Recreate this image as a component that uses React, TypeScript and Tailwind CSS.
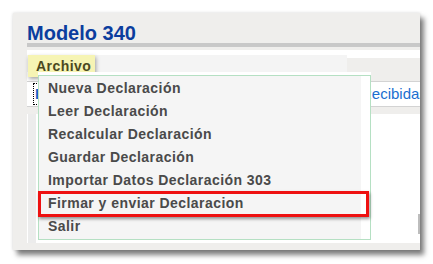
import React from 'react';

const menuItems = [
  'Nueva Declaración',
  'Leer Declaración',
  'Recalcular Declaración',
  'Guardar Declaración',
  'Importar Datos Declaración 303',
  'Firmar y enviar Declaracion',
  'Salir',
];

const App: React.FC = () => {
  return (
    <div className="relative w-[433px] h-[264px] overflow-hidden bg-white pt-[13px] pl-[13px] font-['Liberation_Sans',Arial,sans-serif]">
      {/* Window */}
      <div className="flex flex-col w-[407px] h-[237px] overflow-hidden bg-[#efeeec] pl-[14px] pt-[10px] pb-[7px] shadow-[4px_5px_5px_rgba(0,0,0,0.5),0_0_3px_rgba(0,0,0,0.15)]">
        <h1 className="text-[20px] leading-[20px] font-bold text-[#0b3d9e]">Modelo 340</h1>
        <div className="h-[4px] bg-[#c8c8c8]" />

        {/* Content panel */}
        <div className="mt-[3px] flex-1 flex flex-col bg-white">
          <div className="h-[5px]" />
          <div className="flex h-[27px] border-b border-[#d3d3d3]">
            <div className="w-[320px] h-[17px] bg-[#f4f4f4]" />
            <div className="flex-1 mt-[3px] bg-[#efeeec]" />
          </div>
          <div className="flex items-center h-[24px] whitespace-nowrap">
            <span className="ml-[6px] w-[12px] shrink-0 border border-dotted border-black px-[1px] text-[15px] leading-[20px] font-bold text-[#1565c8]">
              F
            </span>
            <span className="ml-[316px] text-[15px] text-[#1a6fd0]">Recibidas</span>
          </div>
          <div className="h-[8px] border-t border-[#d3d3d3] bg-[#efeeec]" />
          <div className="flex-1 flex">
            <div className="w-[9px] border-l border-white bg-[#ececec]" />
            <div className="flex-1 flex justify-end pt-[100px]">
              <div className="w-[2px] h-[20px] bg-[#bdbdbd]" />
            </div>
          </div>
        </div>
      </div>

      {/* Archivo button */}
      <div className="absolute left-[28px] top-[55px] w-[67px] h-[22px] flex items-center pl-[8px] bg-[#f6f4b4] shadow-[1px_2px_4px_rgba(0,0,0,0.35)] text-[14px] font-bold tracking-[0.45px] text-[#4b4920]">
        Archivo
      </div>

      {/* Dropdown menu */}
      <div className="absolute left-[38px] top-[72px] w-[333px] bg-white pt-[3px] pb-[3px]">
        <div className="relative border border-[#b5e0c3] bg-[#f5f5f5] pt-[1px] pb-[1px] pr-[9px]">
          <div className="absolute right-0 top-0 bottom-0 w-[9px] bg-white" />
          {menuItems.map((item, i) => (
            <div
              key={item}
              className="relative h-[23px] flex items-center pl-[9px] text-[14px] font-bold tracking-[0.45px] text-[#4a4a4a] whitespace-nowrap"
            >
              {i === 5 && (
                <div className="absolute -left-[1px] -top-[1px] w-[331px] h-[26px] border-[3px] border-[#ee1111] shadow-[1px_2px_3px_rgba(0,0,0,0.4)]" />
              )}
              <span className="relative">{item}</span>
            </div>
          ))}
        </div>
      </div>
    </div>
  );
};

export default App;
